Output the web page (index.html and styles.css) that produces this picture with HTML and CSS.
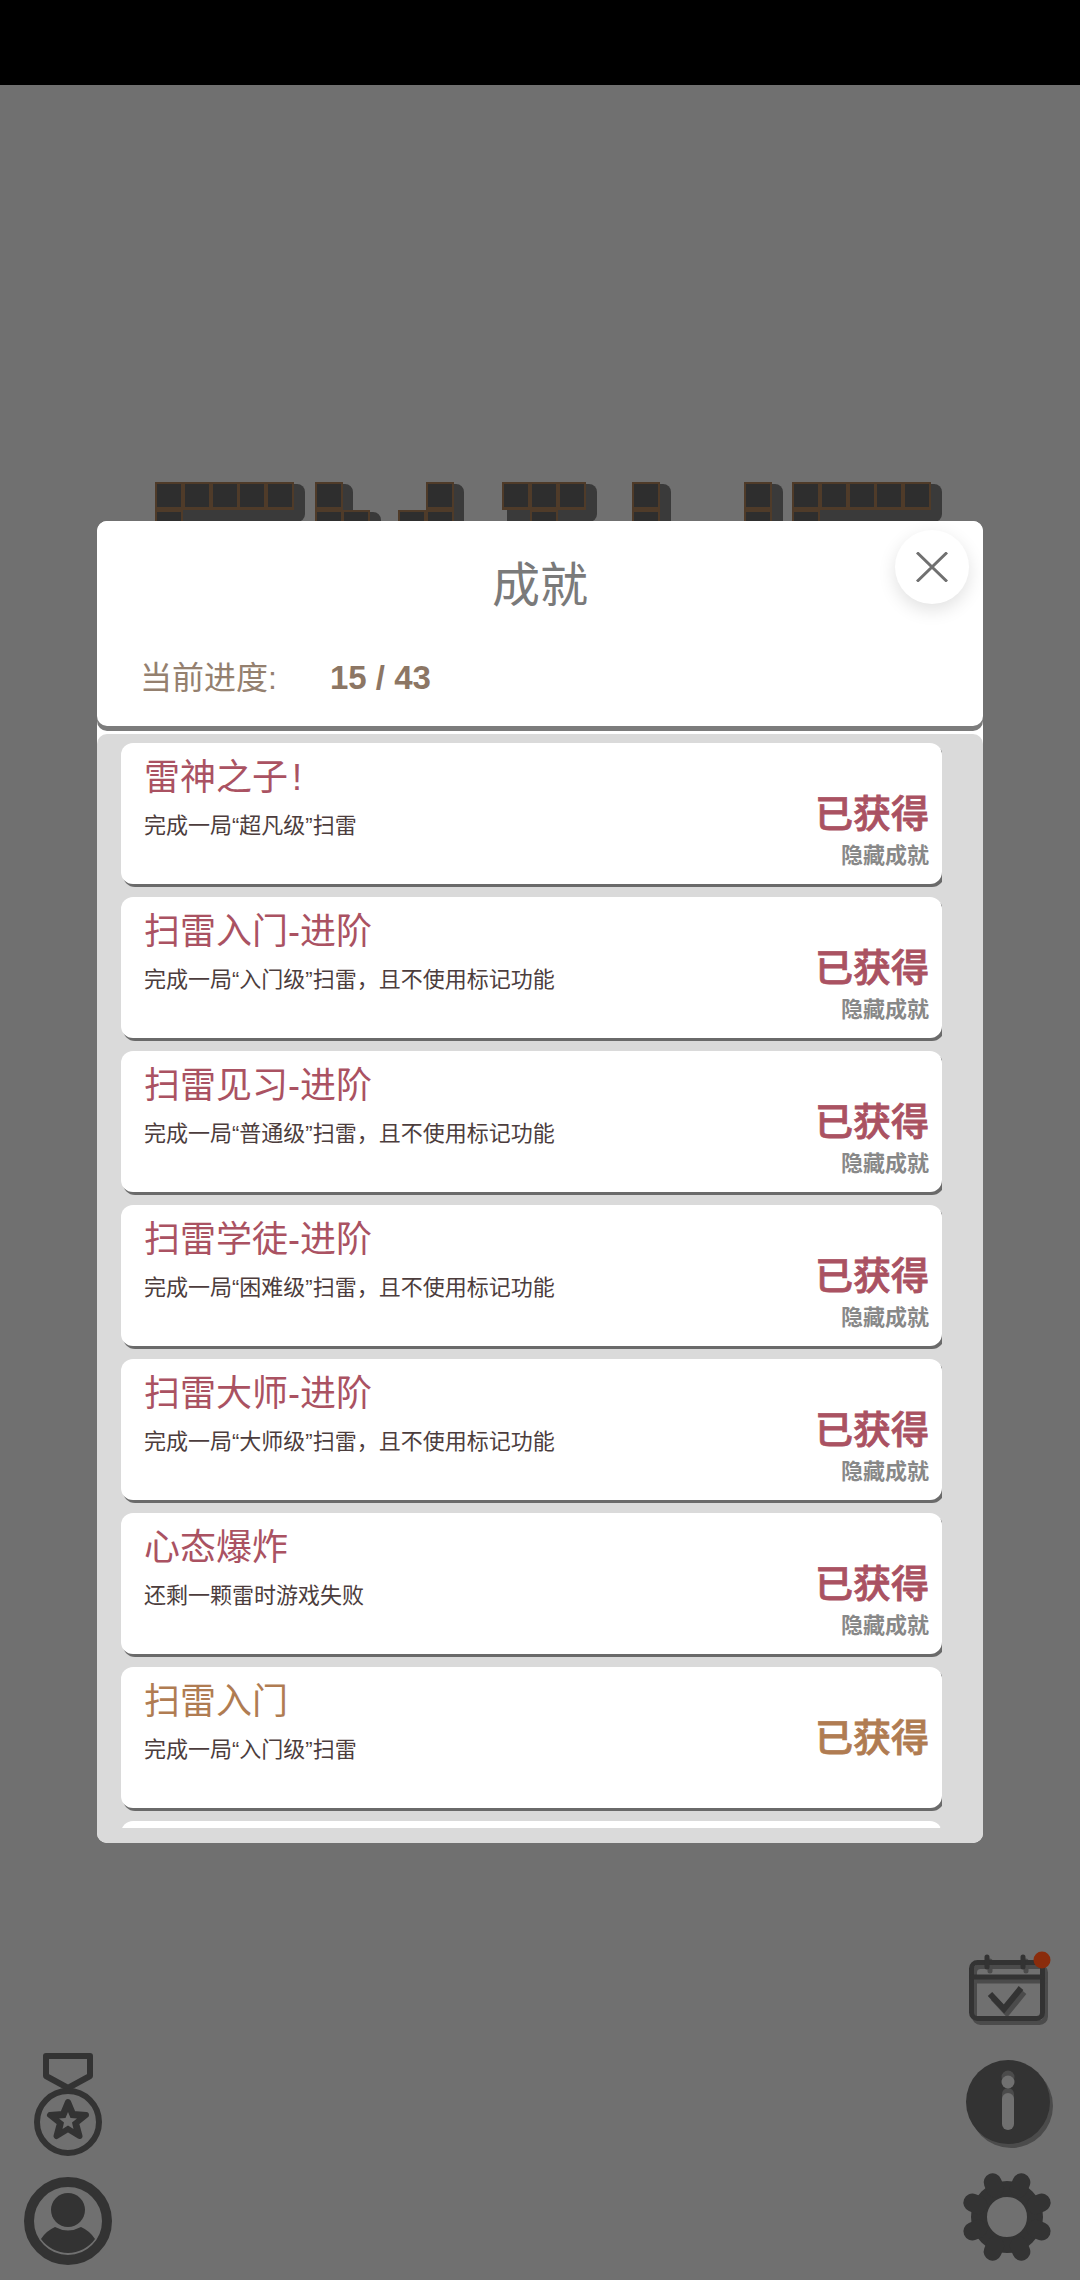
FILE: index.html
```html
<!DOCTYPE html>
<html lang="zh-CN">
<head>
    <meta charset="UTF-8">
    <meta name="viewport" content="width=device-width, initial-scale=1.0">
    <title>成就</title>
    <link rel="stylesheet" href="styles.css">
</head>
<body>
    <div class="top-bar"></div>

    <div class="stage">
        <!-- 背景标题方块 -->
        <svg class="board" width="1080" height="60" viewBox="0 0 1080 60">
            <defs>
                <g id="cell">
                    <rect x="0" y="0" width="28" height="28" fill="#4f3b29"></rect>
                    <rect x="2" y="2" width="24" height="23" fill="#2e2e2e"></rect>
                </g>
            </defs>
            <path class="board-shadow" d="M160 2H297a8 8 0 0 1 8 8V32a8 8 0 0 1-8 8H160Z"></path>
            <path class="board-shadow" d="M320 2H345a8 8 0 0 1 8 8V30H373a8 8 0 0 1 8 8V60H320Z"></path>
            <path class="board-shadow" d="M430 2H456a8 8 0 0 1 8 8V60H405V32H430Z"></path>
            <path class="board-shadow" d="M507 2H589a8 8 0 0 1 8 8V32a8 8 0 0 1-8 8H507Z"></path>
            <path class="board-shadow" d="M640 2H663a8 8 0 0 1 8 8V60H640Z"></path>
            <path class="board-shadow" d="M750 2H775a8 8 0 0 1 8 8V60H750Z"></path>
            <path class="board-shadow" d="M797 2H934a8 8 0 0 1 8 8V32a8 8 0 0 1-8 8H797Z"></path>

            <use href="#cell" x="155" y="0"></use><use href="#cell" x="183" y="0"></use><use href="#cell" x="211" y="0"></use><use href="#cell" x="238" y="0"></use><use href="#cell" x="266" y="0"></use>
            <use href="#cell" x="155" y="28"></use>
            <use href="#cell" x="315" y="0"></use><use href="#cell" x="315" y="28"></use><use href="#cell" x="342" y="28"></use>
            <use href="#cell" x="426" y="0"></use><use href="#cell" x="398" y="28"></use><use href="#cell" x="426" y="28"></use>
            <use href="#cell" x="502" y="0"></use><use href="#cell" x="530" y="0"></use><use href="#cell" x="558" y="0"></use>
            <use href="#cell" x="530" y="28"></use>
            <use href="#cell" x="632" y="0"></use><use href="#cell" x="632" y="28"></use>
            <use href="#cell" x="744" y="0"></use><use href="#cell" x="744" y="28"></use>
            <use href="#cell" x="792" y="0"></use><use href="#cell" x="820" y="0"></use><use href="#cell" x="848" y="0"></use><use href="#cell" x="875" y="0"></use><use href="#cell" x="903" y="0"></use>
            <use href="#cell" x="792" y="28"></use>
        </svg>

        <!-- 成就面板 -->
        <div class="panel">
            <div class="panel-head">
                <h1 class="panel-title">成就</h1>
                <div class="progress">
                    <span class="progress-label">当前进度:</span>
                    <span class="progress-value">15 / 43</span>
                </div>
                <button class="close-btn" aria-label="关闭">
                    <svg width="32" height="30" viewBox="0 0 32 30">
                        <path d="M1 0.5L31 29.5M31 0.5L1 29.5" fill="none" stroke="#707070" stroke-width="3"></path>
                    </svg>
                </button>
            </div>

            <div class="panel-body">
                <div class="list">
                    <div class="card hidden-type">
                        <div class="card-text">
                            <div class="card-title">雷神之子<span class="bang">!</span></div>
                            <div class="card-desc">完成一局“超凡级”扫雷</div>
                        </div>
                        <div class="card-state">
                            <div class="state-text">已获得</div>
                            <div class="state-tag">隐藏成就</div>
                        </div>
                    </div>
                    <div class="card hidden-type">
                        <div class="card-text">
                            <div class="card-title">扫雷入门-进阶</div>
                            <div class="card-desc">完成一局“入门级”扫雷，且不使用标记功能</div>
                        </div>
                        <div class="card-state">
                            <div class="state-text">已获得</div>
                            <div class="state-tag">隐藏成就</div>
                        </div>
                    </div>
                    <div class="card hidden-type">
                        <div class="card-text">
                            <div class="card-title">扫雷见习-进阶</div>
                            <div class="card-desc">完成一局“普通级”扫雷，且不使用标记功能</div>
                        </div>
                        <div class="card-state">
                            <div class="state-text">已获得</div>
                            <div class="state-tag">隐藏成就</div>
                        </div>
                    </div>
                    <div class="card hidden-type">
                        <div class="card-text">
                            <div class="card-title">扫雷学徒-进阶</div>
                            <div class="card-desc">完成一局“困难级”扫雷，且不使用标记功能</div>
                        </div>
                        <div class="card-state">
                            <div class="state-text">已获得</div>
                            <div class="state-tag">隐藏成就</div>
                        </div>
                    </div>
                    <div class="card hidden-type">
                        <div class="card-text">
                            <div class="card-title">扫雷大师-进阶</div>
                            <div class="card-desc">完成一局“大师级”扫雷，且不使用标记功能</div>
                        </div>
                        <div class="card-state">
                            <div class="state-text">已获得</div>
                            <div class="state-tag">隐藏成就</div>
                        </div>
                    </div>
                    <div class="card hidden-type">
                        <div class="card-text">
                            <div class="card-title">心态爆炸</div>
                            <div class="card-desc">还剩一颗雷时游戏失败</div>
                        </div>
                        <div class="card-state">
                            <div class="state-text">已获得</div>
                            <div class="state-tag">隐藏成就</div>
                        </div>
                    </div>
                    <div class="card normal-type">
                        <div class="card-text">
                            <div class="card-title">扫雷入门</div>
                            <div class="card-desc">完成一局“入门级”扫雷</div>
                        </div>
                        <div class="card-state">
                            <div class="state-text">已获得</div>
                        </div>
                    </div>
                    <div class="card normal-type"></div>
                </div>
            </div>
        </div>

        <!-- 底部按钮 -->
        <div class="tools">
            <div class="tools-col tools-left">
                <svg width="68" height="104" viewBox="0 0 68 104">
                    <path d="M12 4H56V24L34 36L12 24Z" fill="none" stroke="#333" stroke-width="6" stroke-linejoin="round"></path>
                    <circle cx="34" cy="70" r="31" fill="none" stroke="#333" stroke-width="6"></circle>
                    <path d="M34 50L39 62L52 63L42 71L45.500 84L34 77L22.500 84L26 71L16 63L29 62Z" fill="#333" stroke="#333" stroke-width="6" stroke-linejoin="round"></path>
                    <path d="M34 60L36.500 66L43 66.500L38 70.500L39.500 77L34 73.500L28.500 77L30 70.500L25 66.500L31.500 66Z" fill="#707070"></path>
                </svg>
                <svg width="88" height="88" viewBox="0 0 88 88">
                    <circle cx="44" cy="44" r="39" fill="none" stroke="#333" stroke-width="10"></circle>
                    <circle cx="44" cy="33" r="17" fill="#333"></circle>
                    <path d="M17 62Q22 54 31 50Q44 57 57 50Q66 54 71 62A33 33 0 0 1 17 62Z" fill="#333"></path>
                </svg>
            </div>
            <div class="tools-col tools-right">
                <svg width="90" height="83" viewBox="0 0 90 83">
                    <g fill="none" stroke="#4b4b4b" stroke-linecap="round" transform="translate(3 4)">
                        <rect x="9.500" y="11.500" width="71" height="56" rx="6" stroke-width="5"></rect>
                        <path d="M10 26H80" stroke-width="5"></path>
                        <path d="M25 6V16M61 6V16" stroke-width="5"></path>
                        <path d="M28 43L42 58L59 37" stroke-width="6" stroke-linecap="butt"></path>
                    </g>
                    <g fill="none" stroke="#333" stroke-linecap="round">
                        <rect x="9.500" y="11.500" width="71" height="56" rx="6" stroke-width="5"></rect>
                        <path d="M10 26H80" stroke-width="5"></path>
                        <path d="M25 6V16M61 6V16" stroke-width="5"></path>
                        <path d="M28 43L42 58L59 37" stroke-width="6" stroke-linecap="butt"></path>
                    </g>
                    <circle cx="80" cy="9" r="8.500" fill="#8a2c0c"></circle>
                </svg>
                <svg width="94" height="94" viewBox="-2 0 94 94">
                    <circle cx="49" cy="50" r="42" fill="#4b4b4b"></circle>
                    <circle cx="46" cy="46" r="42" fill="#333"></circle>
                    <circle cx="46" cy="21" r="6.500" fill="#4b4b4b"></circle>
                    <path d="M46 38V64" stroke="#4b4b4b" stroke-width="12" stroke-linecap="round"></path>
                    <circle cx="46" cy="26" r="6.500" fill="#707070"></circle>
                    <path d="M46 43V68" stroke="#707070" stroke-width="12" stroke-linecap="round"></path>
                </svg>
                <svg class="gear" width="90" height="92" viewBox="0 0 90 92">
                    <g transform="translate(45 45)">
                        <circle r="28" fill="none" stroke="#333" stroke-width="16"></circle>
                        <g stroke="#333" stroke-width="18" stroke-linecap="round">
                            <path d="M0 -31V-37.500" transform="rotate(22.500)"></path>
                            <path d="M0 -31V-37.500" transform="rotate(67.500)"></path>
                            <path d="M0 -31V-37.500" transform="rotate(112.500)"></path>
                            <path d="M0 -31V-37.500" transform="rotate(157.500)"></path>
                            <path d="M0 -31V-37.500" transform="rotate(202.500)"></path>
                            <path d="M0 -31V-37.500" transform="rotate(247.500)"></path>
                            <path d="M0 -31V-37.500" transform="rotate(292.500)"></path>
                            <path d="M0 -31V-37.500" transform="rotate(337.500)"></path>
                        </g>
                    </g>
                </svg>
            </div>
        </div>
    </div>
</body>
</html>
```

FILE: styles.css
```css
* {
    margin: 0;
    padding: 0;
    box-sizing: border-box;
}

body {
    width: 1080px;
    height: 2280px;
    overflow: hidden;
    display: flex;
    flex-direction: column;
    font-family: "Liberation Sans", "Noto Sans CJK SC", sans-serif;
    background: #707070;
}

.top-bar {
    height: 85px;
    background: #000;
}

.stage {
    position: relative;
    flex: 1;
    display: flex;
    flex-direction: column;
    padding-top: 436px;
}

/* 背景方块 */
.board {
    position: absolute;
    top: 397px;
    left: 0;
}

.board-shadow {
    fill: #3a3a3a;
}

/* 面板 */
.panel {
    position: relative;
    width: 886px;
    height: 1322px;
    margin-left: 97px;
    display: flex;
    flex-direction: column;
    background: #fff;
    border-radius: 10px;
}

.panel-head {
    position: relative;
    height: 205px;
    background: #fff;
    border-radius: 10px;
    box-shadow: 0 5px 0 #7c7c7c;
}

.panel-title {
    padding-top: 31px;
    font-size: 48px;
    line-height: 68px;
    font-weight: 400;
    text-align: center;
    color: #7a7a7a;
}

.progress {
    display: flex;
    align-items: center;
    margin-top: 35px;
    padding-left: 43px;
    line-height: 46px;
}

.progress-label {
    width: 190px;
    font-size: 32px;
    color: #94806f;
}

.progress-value {
    font-size: 33px;
    font-weight: 700;
    color: #8c7664;
}

.close-btn {
    position: absolute;
    top: 9px;
    right: 14px;
    width: 74px;
    height: 74px;
    display: flex;
    align-items: center;
    justify-content: center;
    border: none;
    border-radius: 50%;
    background: #fff;
    box-shadow: 0 6px 18px rgba(0, 0, 0, 0.12);
}

.panel-body {
    flex: 1;
    margin-top: 8px;
    padding: 9px 41px 15px 24px;
    min-height: 0;
    background: #dadada;
    border-radius: 10px;
}

.list {
    height: 100%;
    overflow: hidden;
    display: flex;
    flex-direction: column;
    gap: 13px;
    padding-right: 3px;
}

/* 成就卡片 */
.card {
    flex: none;
    height: 141px;
    display: flex;
    justify-content: space-between;
    margin-right: -3px;
    width: 821px;
    background: #fff;
    border-radius: 12px;
    box-shadow: 2px 3px 0 #6a6a6a;
}

.card-text {
    padding: 11px 0 0 23px;
}

.card-title {
    font-size: 36px;
    line-height: 48px;
}

.bang {
    margin-left: 4px;
}

.card-desc {
    margin-top: 9px;
    font-size: 22px;
    line-height: 30px;
    color: #4c3d3d;
}

.card-state {
    padding: 46px 13px 0 0;
    text-align: right;
}

.state-text {
    font-size: 38px;
    line-height: 50px;
    font-weight: 500;
    -webkit-text-stroke: 0.8px currentColor;
}

.state-tag {
    font-size: 22px;
    line-height: 34px;
    font-weight: 700;
    color: #888;
}

.hidden-type .card-title,
.hidden-type .state-text {
    color: #aa5262;
}

.normal-type .card-title,
.normal-type .state-text {
    color: #b07c52;
}

/* 底部按钮 */
.tools {
    flex: 1;
    display: flex;
    justify-content: space-between;
    align-items: flex-end;
    padding: 0 28px 16px 24px;
}

.tools-col {
    display: flex;
    flex-direction: column;
    align-items: center;
}

.tools-left {
    width: 88px;
    gap: 21px;
    margin-bottom: -1px;
}

.tools-right {
    width: 90px;
    gap: 22px;
}

.tools svg {
    display: block;
    flex: none;
}

.tools .gear {
    overflow: visible;
}
```
